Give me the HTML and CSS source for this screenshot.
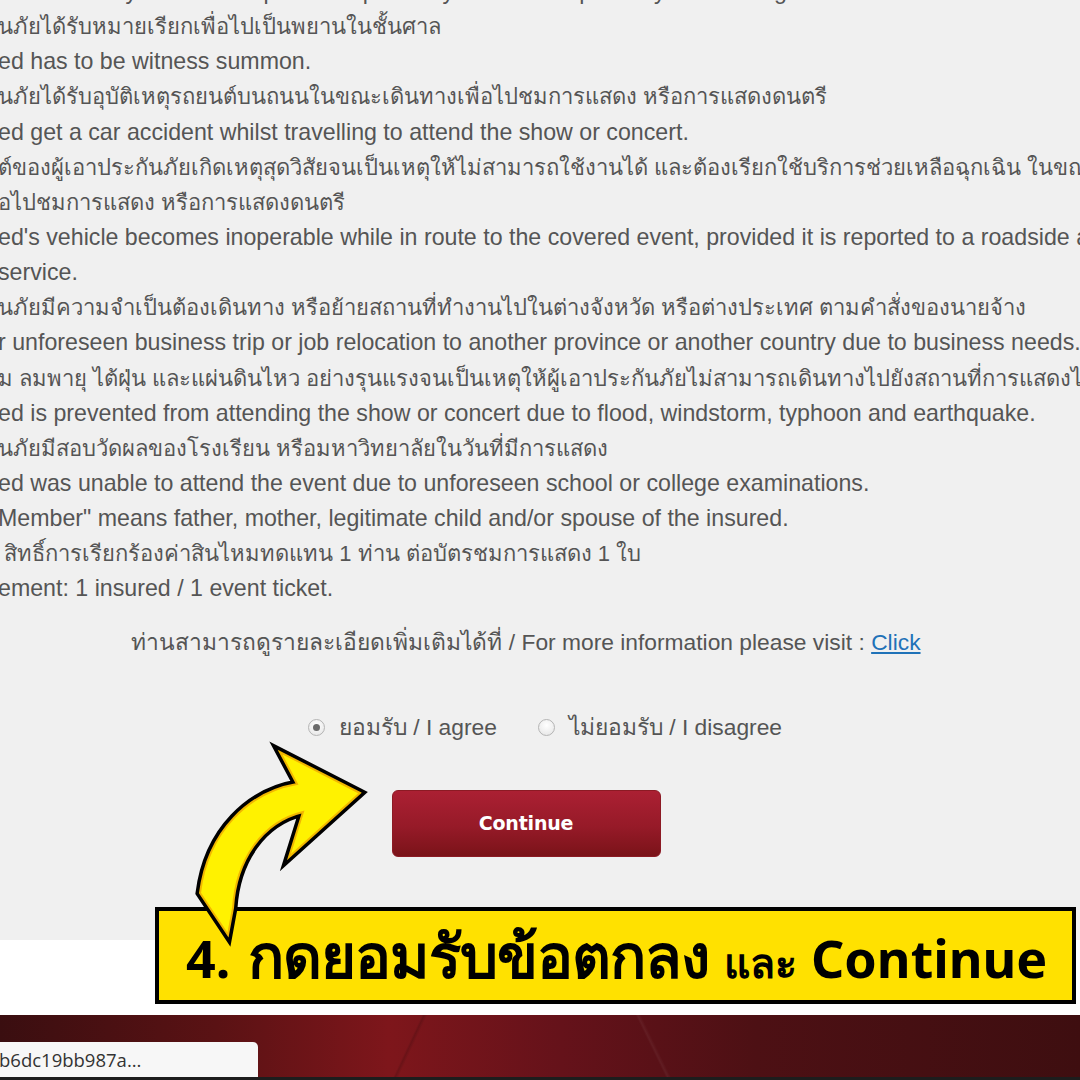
FILE: index.html
```html
<!DOCTYPE html>
<html lang="th">
<head>
<meta charset="utf-8">
<title>Terms</title>
<link rel="stylesheet" href="styles.css">
</head>
<body>
<div class="screen">
  <section class="page">
    <div class="terms">
      <p class="ln en">ed or a family member requires hospital stay and is unexpectedly unable to go</p>
      <p class="ln th">นภัยได้รับหมายเรียกเพื่อไปเป็นพยานในชั้นศาล</p>
      <p class="ln en">ed has to be witness summon.</p>
      <p class="ln th">นภัยได้รับอุบัติเหตุรถยนต์บนถนนในขณะเดินทางเพื่อไปชมการแสดง หรือการแสดงดนตรี</p>
      <p class="ln en">ed get a car accident whilst travelling to attend the show or concert.</p>
      <p class="ln th">ต์ของผู้เอาประกันภัยเกิดเหตุสุดวิสัยจนเป็นเหตุให้ไม่สามารถใช้งานได้ และต้องเรียกใช้บริการช่วยเหลือฉุกเฉิน ในขณะเดินทาง</p>
      <p class="ln th">อไปชมการแสดง หรือการแสดงดนตรี</p>
      <p class="ln en">ed's vehicle becomes inoperable while in route to the covered event, provided it is reported to a roadside assistance</p>
      <p class="ln en">service.</p>
      <p class="ln th">นภัยมีความจำเป็นต้องเดินทาง หรือย้ายสถานที่ทำงานไปในต่างจังหวัด หรือต่างประเทศ ตามคำสั่งของนายจ้าง</p>
      <p class="ln en">r unforeseen business trip or job relocation to another province or another country due to business needs.</p>
      <p class="ln th">ม ลมพายุ ไต้ฝุ่น และแผ่นดินไหว อย่างรุนแรงจนเป็นเหตุให้ผู้เอาประกันภัยไม่สามารถเดินทางไปยังสถานที่การแสดงได้</p>
      <p class="ln en">ed is prevented from attending the show or concert due to flood, windstorm, typhoon and earthquake.</p>
      <p class="ln th">นภัยมีสอบวัดผลของโรงเรียน หรือมหาวิทยาลัยในวันที่มีการแสดง</p>
      <p class="ln en">ed was unable to attend the event due to unforeseen school or college examinations.</p>
      <p class="ln en">Member" means father, mother, legitimate child and/or spouse of the insured.</p>
      <p class="ln th">&nbsp;สิทธิ์การเรียกร้องค่าสินไหมทดแทน 1 ท่าน ต่อบัตรชมการแสดง 1 ใบ</p>
      <p class="ln en">ement: 1 insured / 1 event ticket.</p>
    </div>
    <p class="more">ท่านสามารถดูรายละเอียดเพิ่มเติมได้ที่ / For more information please visit : <a class="link" href="#">Click</a></p>
    <div class="choices">
      <label class="choice"><span class="radio checked"></span>ยอมรับ / I agree</label>
      <label class="choice"><span class="radio"></span>ไม่ยอมรับ / I disagree</label>
    </div>
    <div class="actions">
      <button class="continue" type="button">Continue</button>
    </div>
  </section>
  <div class="blank"></div>
  <footer class="taskbar">
    <div class="status">b6dc19bb987a...</div>
  </footer>

  <div class="callout"><span class="num">4.</span> <span class="thai">กดยอมรับข้อตกลง</span> <span class="and">และ</span> Continue</div>

  <svg class="arrow" viewBox="170 740 210 210" width="210" height="210" aria-hidden="true">
    <path class="arrow-outline" d="M 360 793 L 280 752 L 297 784 C 250 792 208 830 200 893 L 228 935 L 233 908 C 236 860 262 822 303 812 L 289 857 Z"/>
    <path class="arrow-fill" d="M 360 793 L 280 752 L 297 784 C 250 792 208 830 200 893 L 228 935 L 233 908 C 236 860 262 822 303 812 L 289 857 Z"/>
  </svg>
</div>
</body>
</html>
```

FILE: styles.css
```css
* { box-sizing: border-box; }

html, body {
  margin: 0;
  padding: 0;
}

body {
  width: 1080px;
  height: 1080px;
  overflow: hidden;
  font-family: "Liberation Sans", Arial, sans-serif;
}

.screen {
  position: relative;
  width: 1080px;
  height: 1080px;
  overflow: hidden;
  display: flex;
  flex-direction: column;
}

.page {
  height: 940px;
  flex: none;
  background: #f0f0f0;
  overflow: hidden;
  display: flex;
  flex-direction: column;
}

.terms {
  margin-top: -26px;
  margin-left: -2px;
  color: #555;
}

.ln {
  margin: 0;
  line-height: 35.15px;
  height: 35.15px;
  white-space: nowrap;
}

.ln.en { font-size: 23.2px; }
.ln.th { font-size: 22px; }

.more {
  margin: 18px 0 0;
  padding-right: 28px;
  text-align: center;
  line-height: 35px;
  font-size: 22.8px;
  color: #555;
  white-space: nowrap;
}

.link {
  color: #1f72b8;
  text-decoration: underline;
}

.choices {
  margin-top: 50px;
  height: 35px;
  display: flex;
  justify-content: center;
  align-items: center;
  gap: 41px;
  padding-left: 10px;
  font-size: 22.8px;
  color: #555;
}

.choice {
  display: flex;
  align-items: center;
  gap: 14px;
  white-space: nowrap;
}

.radio {
  width: 17px;
  height: 17px;
  border-radius: 50%;
  border: 1px solid #b4b4b4;
  background: radial-gradient(circle at 50% 35%, #ffffff 0%, #e3e3e3 100%);
  display: inline-flex;
  align-items: center;
  justify-content: center;
}

.radio.checked::after {
  content: "";
  width: 7px;
  height: 7px;
  border-radius: 50%;
  background: #6a6a6a;
}

.actions {
  margin-top: 45px;
  display: flex;
  justify-content: center;
  padding-right: 28px;
}

.continue {
  width: 269px;
  height: 67px;
  border: 1px solid #8c1a24;
  border-radius: 6px;
  background: linear-gradient(to bottom, #ab2033 0%, #961a28 55%, #7a1319 100%);
  color: #fff;
  font-family: "DejaVu Sans", Verdana, sans-serif;
  font-weight: bold;
  font-size: 19px;
  letter-spacing: -0.2px;
}

.blank {
  height: 75px;
  flex: none;
  background: #ffffff;
}

.taskbar {
  flex: 1;
  display: flex;
  align-items: flex-end;
  padding-bottom: 3px;
  background:
    linear-gradient(64deg, transparent 60%, rgba(255,255,255,0.05) 60.2%, transparent 60.5%),
    linear-gradient(115deg, transparent 38%, rgba(0,0,0,0.15) 38.2%, transparent 38.5%),
    linear-gradient(to right, #3a0e10 0%, #5a1214 20%, #7e161b 36%, #65121a 52%, #4d1014 70%, #3e0e10 100%);
  box-shadow: inset 0 -3px 0 #1d1d1d;
}

.status {
  width: 259px;
  height: 35px;
  background: #f7f7f7;
  border-radius: 0 5px 0 0;
  font-family: "Open Sans", "Noto Sans", sans-serif;
  font-size: 18.5px;
  line-height: 35px;
  color: #333;
  margin-left: -1px;
  white-space: nowrap;
  overflow: hidden;
}

.callout {
  position: absolute;
  left: 155px;
  top: 907px;
  width: 921px;
  height: 97px;
  border: 4px solid #000;
  background: #ffe100;
  color: #000;
  font-family: "Noto Sans", "Open Sans", sans-serif;
  font-weight: bold;
  font-size: 52px;
  line-height: 88px;
  padding-left: 27px;
  white-space: nowrap;
}

.callout .num {
  margin-right: 4px;
}

.callout .thai {
  font-size: 60px;
  letter-spacing: -1px;
}

.callout .and {
  font-size: 41px;
  margin-left: 2px;
}

.arrow {
  position: absolute;
  left: 170px;
  top: 740px;
  overflow: visible;
}

.arrow-outline {
  fill: none;
  stroke: #000;
  stroke-width: 9;
  stroke-linejoin: miter;
  stroke-miterlimit: 10;
}

.arrow-fill {
  fill: #fff200;
  stroke: #f2b700;
  stroke-width: 2;
  stroke-linejoin: miter;
}
```
